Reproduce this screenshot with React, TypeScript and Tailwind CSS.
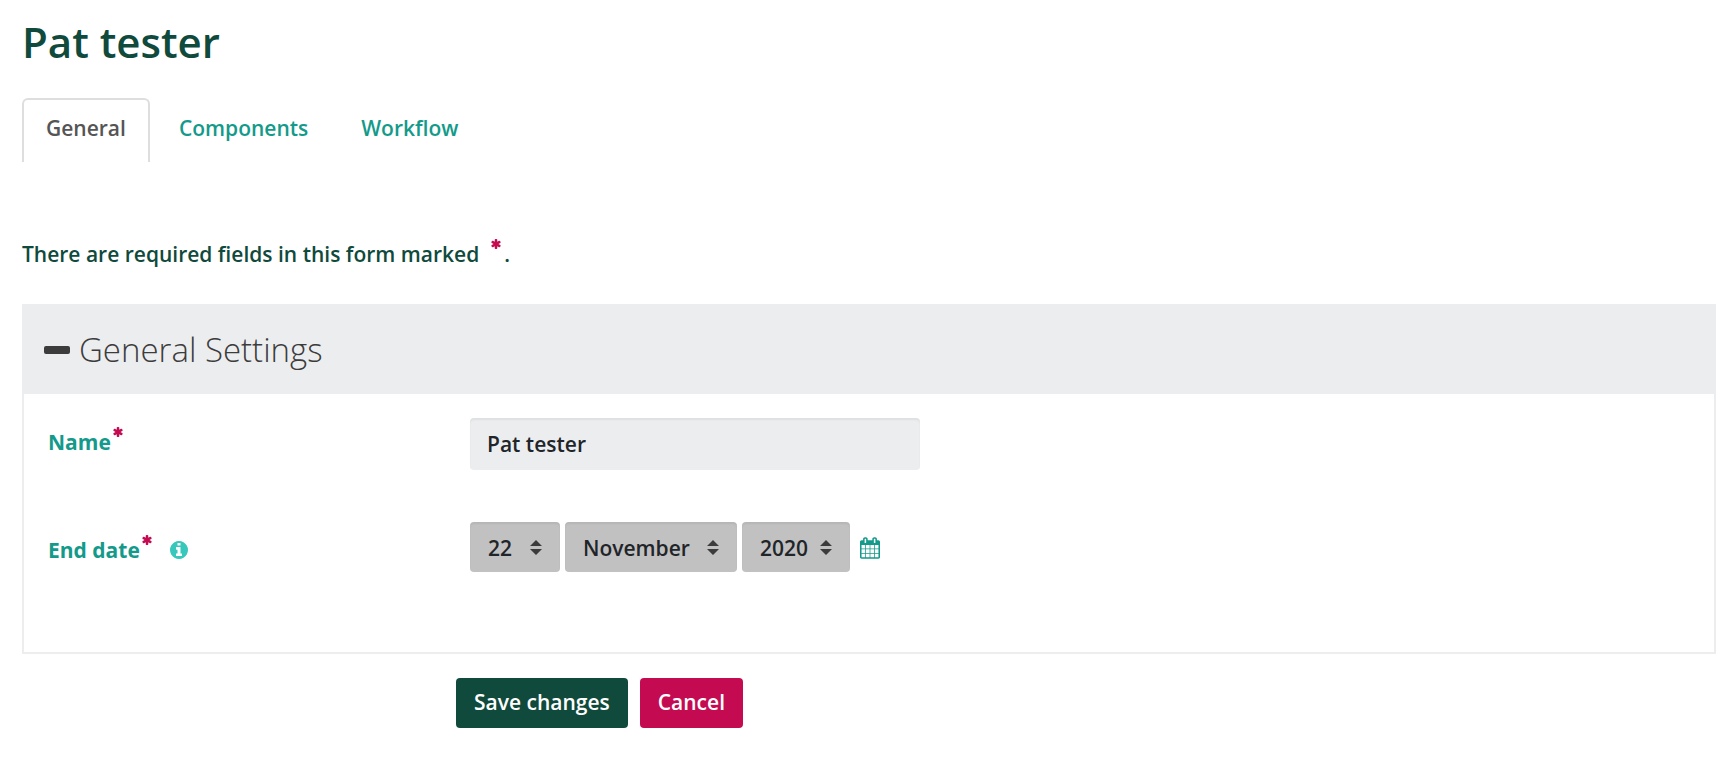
import { useState } from 'react';

const tabs = ['General', 'Components', 'Workflow'];
const days = Array.from({ length: 31 }, (_, i) => String(i + 1));
const months = [
    'January', 'February', 'March', 'April', 'May', 'June',
    'July', 'August', 'September', 'October', 'November', 'December',
];
const years = ['2018', '2019', '2020', '2021', '2022'];

function Required() {
    return (
        <svg viewBox="128 128 1536 1536" className="inline-block size-[10px] shrink-0 fill-[#c40b52]" role="img" aria-label="Required">
            <path d="M1546 1050q46 26 59.5 77.5t-12.5 97.5l-64 110q-26 46-77.5 59.5t-97.5-12.5l-266-153v307q0 52-38 90t-90 38h-128q-52 0-90-38t-38-90v-307l-266 153q-46 26-97.5 12.5t-77.5-59.5l-64-110q-26-46-12.5-97.5t59.5-77.5l266-154-266-154q-46-26-59.5-77.5t12.5-97.5l64-110q26-46 77.5-59.5t97.5 12.5l266 153v-307q0-52 38-90t90-38h128q52 0 90 38t38 90v307l266-153q46-26 97.5-12.5t77.5 59.5l64 110q26 46 12.5 97.5t-59.5 77.5l-266 154z" />
        </svg>
    );
}

function InfoIcon() {
    return (
        <svg viewBox="128 128 1536 1536" className="size-[18px] fill-[#38c8bb]" aria-hidden="true">
            <path d="M1152 1376v-160q0-14-9-23t-23-9h-96v-512q0-14-9-23t-23-9h-320q-14 0-23 9t-9 23v160q0 14 9 23t23 9h96v320h-96q-14 0-23 9t-9 23v160q0 14 9 23t23 9h448q14 0 23-9t9-23zm-128-896v-160q0-14-9-23t-23-9h-192q-14 0-23 9t-9 23v160q0 14 9 23t23 9h192q14 0 23-9t9-23zm640 416q0 209-103 385.5t-279.5 279.5-385.5 103-385.5-103-279.5-279.5-103-385.5 103-385.5 279.5-279.5 385.5-103 385.5 103 279.5 279.5 103 385.5z" />
        </svg>
    );
}

function CalendarIcon() {
    return (
        <svg viewBox="64 0 1664 1792" className="h-[22px] w-[20px] fill-[#139a8a]" aria-hidden="true">
            <path d="M192 1664h288v-288h-288v288zm352 0h320v-288h-320v288zm-352-352h288v-320h-288v320zm352 0h320v-320h-320v320zm-352-384h288v-288h-288v288zm736 736h320v-288h-320v288zm-384-736h320v-288h-320v288zm768 736h288v-288h-288v288zm-384-352h320v-320h-320v320zm-352-864v-288q0-13-9.5-22.5t-22.5-9.5h-64q-13 0-22.5 9.5t-9.5 22.5v288q0 13 9.5 22.5t22.5 9.5h64q13 0 22.5-9.5t9.5-22.5zm736 864h288v-320h-288v320zm-384-384h320v-288h-320v288zm384 0h288v-288h-288v288zm32-480v-288q0-13-9.5-22.5t-22.5-9.5h-64q-13 0-22.5 9.5t-9.5 22.5v288q0 13 9.5 22.5t22.5 9.5h64q13 0 22.5-9.5t9.5-22.5zm384-64v1280q0 52-38 90t-90 38h-1408q-52 0-90-38t-38-90v-1280q0-52 38-90t90-38h128v-96q0-66 47-113t113-47h64q66 0 113 47t47 113v96h384v-96q0-66 47-113t113-47h64q66 0 113 47t47 113v96h128q52 0 90 38t38 90z" />
        </svg>
    );
}

interface DateSelectProps {
    id: string;
    label: string;
    options: string[];
    initial: string;
    width: string;
}

function DateSelect({ id, label, options, initial, width }: DateSelectProps) {
    return (
        <div className={`relative ${width}`}>
            <select
                id={id}
                aria-label={label}
                defaultValue={initial}
                className="h-[50px] w-full appearance-none rounded bg-[#c1c1c1] pt-[2px] pl-[18px] font-semibold text-[#212529] shadow-[inset_0_2px_2px_rgba(0,0,0,0.06)]"
            >
                {options.map((option) => (
                    <option key={option}>{option}</option>
                ))}
            </select>
            <svg viewBox="0 0 4 5" className="pointer-events-none absolute top-[18px] right-[18px] h-[15px] w-[12px] fill-[#3c3c3c]" aria-hidden="true">
                <path d="M2 0L0 2h4zm0 5L0 3h4z" />
            </svg>
        </div>
    );
}

export default function App() {
    const [active, setActive] = useState('General');
    const [open, setOpen] = useState(true);

    return (
        <main className="px-[22px] pt-3 pr-5 pb-9 font-['Open_Sans',sans-serif] text-[21px] leading-[30px] font-semibold">
            <h1 className="text-[42px] leading-[60px] text-[#0f4a3c]">Pat tester</h1>

            <div role="tablist" className="mt-[26px] flex gap-[5px]">
                {tabs.map((tab) => (
                    <button
                        key={tab}
                        type="button"
                        role="tab"
                        aria-selected={tab === active}
                        onClick={() => setActive(tab)}
                        className={`h-16 rounded-t-md border-2 border-b-0 px-[22px] pb-[6px] ${tab === active ? 'border-[#dedede] text-[#555555]' : 'border-transparent text-[#139a8a]'}`}
                    >
                        {tab}
                    </button>
                ))}
            </div>

            <form onSubmit={(e) => e.preventDefault()}>
                <p className="mt-[77px] flex text-[#0f4a3c]">
                    There are required fields in this form marked
                    <span className="ml-3 flex">
                        <Required />
                    </span>
                    <span className="ml-[3px]">.</span>
                </p>

                <section className="mt-[35px] border-2 border-t-0 border-[#ecedef]">
                    <h2 className="bg-[#ecedef] text-[33px] font-light text-[#3c3c3c]">
                        <button
                            type="button"
                            aria-expanded={open}
                            onClick={() => setOpen(!open)}
                            className="flex h-[90px] w-full items-center gap-[9px] px-5 pt-[2px]"
                        >
                            <svg viewBox="0 0 26 8" className="h-2 w-[26px] fill-[#3c3c3c]" aria-hidden="true">
                                <rect width="26" height="8" rx="2" />
                            </svg>
                            General Settings
                        </button>
                    </h2>

                    {open && (
                        <div className="grid grid-cols-[422px_1fr] gap-y-[52px] px-6 pt-6 pb-20">
                            <div className="flex pt-[9px] font-bold text-[#139a8a]">
                                <label htmlFor="name">Name</label>
                                <span className="ml-[2px] flex">
                                    <Required />
                                </span>
                            </div>
                            <input
                                id="name"
                                type="text"
                                defaultValue="Pat tester"
                                className="h-[52px] w-[450px] rounded bg-[#ecedef] px-[17px] text-[#212529] shadow-[inset_0_2px_2px_rgba(0,0,0,0.06)]"
                            />

                            <div className="flex items-start pt-[13px] font-bold text-[#139a8a]">
                                <label htmlFor="day">End date</label>
                                <span className="ml-[2px] flex">
                                    <Required />
                                </span>
                                <button type="button" aria-label="Help with end date" className="ml-[18px] flex h-[30px] items-center">
                                    <InfoIcon />
                                </button>
                            </div>
                            <div className="flex items-center gap-[5px]">
                                <DateSelect id="day" label="End date day" options={days} initial="22" width="w-[90px]" />
                                <DateSelect id="month" label="End date month" options={months} initial="November" width="w-[172px]" />
                                <DateSelect id="year" label="End date year" options={years} initial="2020" width="w-[108px]" />
                                <button type="button" aria-label="Open calendar" className="ml-[5px] pt-[2px]">
                                    <CalendarIcon />
                                </button>
                            </div>
                        </div>
                    )}
                </section>

                <div className="mt-6 ml-[434px] flex gap-3 text-white">
                    <button type="submit" className="h-[50px] rounded bg-[#0f4a3c] px-[18px] pb-[2px]">
                        Save changes
                    </button>
                    <button type="button" className="h-[50px] rounded bg-[#c40b52] px-[18px] pb-[2px]">
                        Cancel
                    </button>
                </div>
            </form>
        </main>
    );
}
